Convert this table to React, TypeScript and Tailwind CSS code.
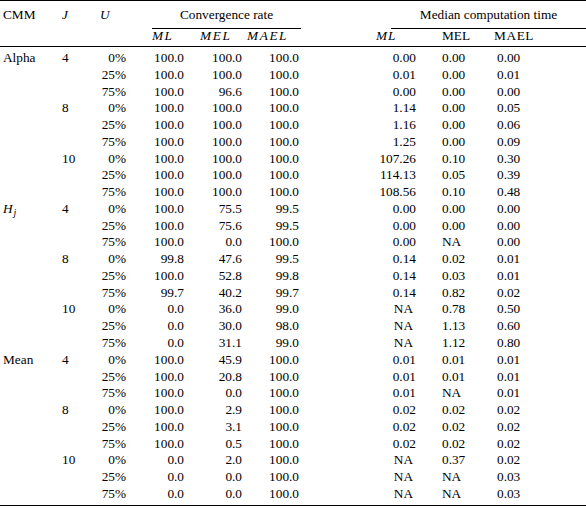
type Row = [string, string, string, string, string, string, string];

const groups: { cmm: string; blocks: { j: string; rows: Row[] }[] }[] = [
  {
    cmm: "Alpha",
    blocks: [
      {
        j: "4",
        rows: [
          ["0%", "100.0", "100.0", "100.0", "0.00", "0.00", "0.00"],
          ["25%", "100.0", "100.0", "100.0", "0.01", "0.00", "0.01"],
          ["75%", "100.0", "96.6", "100.0", "0.00", "0.00", "0.00"],
        ],
      },
      {
        j: "8",
        rows: [
          ["0%", "100.0", "100.0", "100.0", "1.14", "0.00", "0.05"],
          ["25%", "100.0", "100.0", "100.0", "1.16", "0.00", "0.06"],
          ["75%", "100.0", "100.0", "100.0", "1.25", "0.00", "0.09"],
        ],
      },
      {
        j: "10",
        rows: [
          ["0%", "100.0", "100.0", "100.0", "107.26", "0.10", "0.30"],
          ["25%", "100.0", "100.0", "100.0", "114.13", "0.05", "0.39"],
          ["75%", "100.0", "100.0", "100.0", "108.56", "0.10", "0.48"],
        ],
      },
    ],
  },
  {
    cmm: "H",
    blocks: [
      {
        j: "4",
        rows: [
          ["0%", "100.0", "75.5", "99.5", "0.00", "0.00", "0.00"],
          ["25%", "100.0", "75.6", "99.5", "0.00", "0.00", "0.00"],
          ["75%", "100.0", "0.0", "100.0", "0.00", "NA", "0.00"],
        ],
      },
      {
        j: "8",
        rows: [
          ["0%", "99.8", "47.6", "99.5", "0.14", "0.02", "0.01"],
          ["25%", "100.0", "52.8", "99.8", "0.14", "0.03", "0.01"],
          ["75%", "99.7", "40.2", "99.7", "0.14", "0.82", "0.02"],
        ],
      },
      {
        j: "10",
        rows: [
          ["0%", "0.0", "36.0", "99.0", "NA", "0.78", "0.50"],
          ["25%", "0.0", "30.0", "98.0", "NA", "1.13", "0.60"],
          ["75%", "0.0", "31.1", "99.0", "NA", "1.12", "0.80"],
        ],
      },
    ],
  },
  {
    cmm: "Mean",
    blocks: [
      {
        j: "4",
        rows: [
          ["0%", "100.0", "45.9", "100.0", "0.01", "0.01", "0.01"],
          ["25%", "100.0", "20.8", "100.0", "0.01", "0.01", "0.01"],
          ["75%", "100.0", "0.0", "100.0", "0.01", "NA", "0.01"],
        ],
      },
      {
        j: "8",
        rows: [
          ["0%", "100.0", "2.9", "100.0", "0.02", "0.02", "0.02"],
          ["25%", "100.0", "3.1", "100.0", "0.02", "0.02", "0.02"],
          ["75%", "100.0", "0.5", "100.0", "0.02", "0.02", "0.02"],
        ],
      },
      {
        j: "10",
        rows: [
          ["0%", "0.0", "2.0", "100.0", "NA", "0.37", "0.02"],
          ["25%", "0.0", "0.0", "100.0", "NA", "NA", "0.03"],
          ["75%", "0.0", "0.0", "100.0", "NA", "NA", "0.03"],
        ],
      },
    ],
  },
];

const cols = "grid grid-cols-[60px_30px_40px_56px_58px_57px_119px_73px_93px]";

function CmmLabel({ name }: { name: string }) {
  if (name === "H") {
    return (
      <span className="italic">
        H<span className="relative top-[3px] text-[10px] ml-[1px]">j</span>
      </span>
    );
  }
  return <span>{name}</span>;
}

export default function App() {
  return (
    <div className="w-[586px] h-[509px] bg-white text-black font-['Liberation_Serif',serif] text-[13.3px] overflow-hidden">
      {/* top rule */}
      <div className="h-px bg-black" />

      {/* header row 1 */}
      <div className={`${cols} h-[23px] leading-[17px]`}>
        <div className="pl-[3px] pt-[5px]">CMM</div>
        <div className="pl-[2px] pt-[5px] italic">J</div>
        <div className="pl-[10px] pt-[5px] italic">U</div>
        <div className="col-span-3 pl-[22px] pt-[5px]">
          <div className="h-[23px] border-b border-black text-center -mb-px">Convergence rate</div>
        </div>
        <div className="col-span-3 pl-[90px] pt-[5px]">
          <div className="h-[23px] border-b border-black text-center -mb-px">Median computation time</div>
        </div>
      </div>

      {/* header row 2 */}
      <div className={`${cols} h-[23px] pt-[3px] leading-[17px] border-b border-black`}>
        <div />
        <div />
        <div />
        <div className="pl-[22px] italic tracking-[1.5px]">ML</div>
        <div className="pl-[14px] italic tracking-[1.6px]">MEL</div>
        <div className="pl-[3px] italic tracking-[1.6px]">MAEL</div>
        <div className="pl-[75px] italic tracking-[1px]">ML</div>
        <div className="pl-[22px]">MEL</div>
        <div className="pl-[1px] tracking-[0.6px]">MAEL</div>
      </div>

      {/* body */}
      <div className="pt-[3px] pb-[2px] border-b border-black">
        {groups.map((g) =>
          g.blocks.map((b, bi) =>
            b.rows.map((r, ri) => (
              <div key={`${g.cmm}-${b.j}-${r[0]}`} className={`${cols} h-[16.78px] leading-[16.78px]`}>
                <div className="pl-[3px]">{bi === 0 && ri === 0 ? <CmmLabel name={g.cmm} /> : null}</div>
                <div className="pl-[2px]">{ri === 0 ? b.j : ""}</div>
                <div className="text-right pr-[4px]">{r[0]}</div>
                <div className="text-right pr-[2px]">{r[1]}</div>
                <div className="text-right pr-[2px]">{r[2]}</div>
                <div className="text-right pr-[2px]">{r[3]}</div>
                <div className={`text-right ${r[4] === "NA" ? "pr-[7px]" : "pr-[4px]"}`}>{r[4]}</div>
                <div className="pl-[22px]">{r[5]}</div>
                <div className="pl-[4px]">{r[6]}</div>
              </div>
            ))
          )
        )}
      </div>
    </div>
  );
}
